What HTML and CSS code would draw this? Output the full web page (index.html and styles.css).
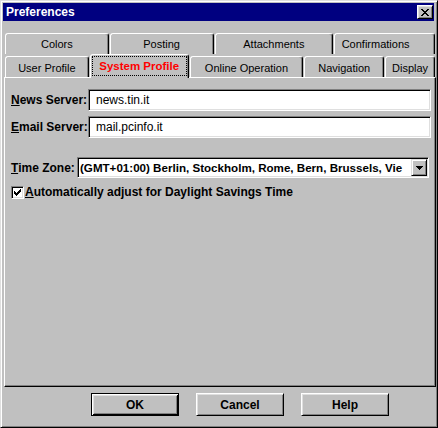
FILE: index.html
```html
<!DOCTYPE html>
<html lang="en">
<head>
  <meta charset="UTF-8" />
  <title>Preferences</title>
  <link rel="stylesheet" href="styles.css">
</head>
<body>

  <div class="window">
    <div class="titlebar">
      <span class="title">Preferences</span>
      <button class="close" type="button">
        <svg width="8" height="7" viewBox="0 0 8 7" shape-rendering="crispEdges">
          <rect x="0" y="0" width="2" height="1" />
          <rect x="6" y="0" width="2" height="1" />
          <rect x="1" y="1" width="2" height="1" />
          <rect x="5" y="1" width="2" height="1" />
          <rect x="2" y="2" width="4" height="1" />
          <rect x="3" y="3" width="2" height="1" />
          <rect x="2" y="4" width="4" height="1" />
          <rect x="1" y="5" width="2" height="1" />
          <rect x="5" y="5" width="2" height="1" />
          <rect x="0" y="6" width="2" height="1" />
          <rect x="6" y="6" width="2" height="1" />
        </svg>
      </button>
    </div>

    <!-- two rows of tabs, the front row touches the page -->
    <div class="tabs">
      <div class="tab-row back">
        <div class="tab tab-colors">Colors</div>
        <div class="tab tab-posting">Posting</div>
        <div class="tab tab-attach">Attachments</div>
        <div class="tab tab-confirm">Confirmations</div>
      </div>
      <div class="tab-row front">
        <div class="tab tab-user">User Profile</div>
        <div class="tab tab-system selected"><span class="focus">System Profile</span></div>
        <div class="tab tab-online">Online Operation</div>
        <div class="tab tab-nav">Navigation</div>
        <div class="tab tab-display">Display</div>
      </div>
    </div>

    <div class="panel">
      <div class="field">
        <label class="label" for="news"><u>N</u>ews Server:</label>
        <input class="textbox" type="text" id="news" value="news.tin.it" />
      </div>
      <div class="field field-email">
        <label class="label" for="email"><u>E</u>mail Server:</label>
        <input class="textbox" type="text" id="email" value="mail.pcinfo.it" />
      </div>
      <div class="field field-zone">
        <span class="label label-zone"><u>T</u>ime Zone:</span>
        <div class="combo">
          <span class="combo-text">(GMT+01:00) Berlin, Stockholm, Rome, Bern, Brussels, Vie</span>
          <span class="combo-btn">
            <svg width="7" height="4" viewBox="0 0 7 4" shape-rendering="crispEdges">
              <rect x="0" y="0" width="7" height="1" />
              <rect x="1" y="1" width="5" height="1" />
              <rect x="2" y="2" width="3" height="1" />
              <rect x="3" y="3" width="1" height="1" />
            </svg>
          </span>
        </div>
      </div>
      <div class="check-row">
        <span class="checkbox">
          <svg width="7" height="7" viewBox="0 0 7 7" shape-rendering="crispEdges">
            <rect x="6" y="0" width="1" height="1" />
            <rect x="5" y="1" width="2" height="1" />
            <rect x="0" y="2" width="1" height="1" />
            <rect x="4" y="2" width="3" height="1" />
            <rect x="0" y="3" width="2" height="1" />
            <rect x="3" y="3" width="3" height="1" />
            <rect x="0" y="4" width="5" height="1" />
            <rect x="1" y="5" width="3" height="1" />
            <rect x="2" y="6" width="1" height="1" />
          </svg>
        </span>
        <span class="check-label"><u>A</u>utomatically adjust for Daylight Savings Time</span>
      </div>
    </div>

    <div class="buttons">
      <button class="btn default" type="button">OK</button>
      <button class="btn" type="button">Cancel</button>
      <button class="btn" type="button">Help</button>
    </div>
  </div>

</body>
</html>
```

FILE: styles.css
```css
body {
  margin: 0;
  font-family: "Liberation Sans", Arial, sans-serif;
  font-size: 12px;
  background-color: #c0c0c0;
}

/* Janela */
.window {
  box-sizing: border-box;
  width: 438px;
  height: 428px;
  display: flex;
  flex-direction: column;
  padding: 2px 1px 1px 2px;
  background-color: #c0c0c0;
  border: 1px solid;
  border-color: #dfdfdf #000 #000 #dfdfdf;
  box-shadow: inset 1px 1px #fff, inset -1px -1px #808080;
}

.titlebar {
  height: 18px;
  margin-right: 2px;
  padding-left: 3px;
  display: flex;
  align-items: center;
  justify-content: space-between;
  background-color: #000080;
  color: white;
}

.title {
  font-weight: bold;
  font-size: 12px;
}

.close {
  box-sizing: border-box;
  width: 16px;
  height: 14px;
  margin-right: 1px;
  padding: 0;
  display: flex;
  align-items: center;
  justify-content: center;
  background-color: #c0c0c0;
  border: 1px solid;
  border-color: #fff #000 #000 #fff;
  box-shadow: inset 1px 1px #dfdfdf, inset -1px -1px #808080;
}

/* Abas */
.tabs {
  margin-top: 12px;
  padding-left: 2px;
}

.tab-row {
  display: flex;
  align-items: flex-end;
}

.tab {
  box-sizing: border-box;
  height: 21px;
  margin-right: 1px;
  border: 1px solid;
  border-bottom: 0;
  border-color: #fff #000 transparent #fff;
  border-radius: 3px 3px 0 0;
  box-shadow: inset -1px 0 #808080;
  background-color: #c0c0c0;
  text-align: center;
  font-size: 11px;
  line-height: 20px;
  white-space: nowrap;
}

.front .tab {
  padding-top: 2px;
  line-height: 18px;
}

.tab-colors { width: 104px; }
.tab-posting { width: 104px; }
.tab-attach { width: 119px; }
.tab-confirm { width: 101px; padding-right: 18px; }

.tab-user { width: 84px; }
.tab-system { width: 99px; }
.tab-online { width: 114px; }
.tab-nav { width: 80px; }
.tab-display { width: 50px; }

.front .tab.selected {
  position: relative;
  z-index: 1;
  height: 24px;
  margin-bottom: -1px;
  padding: 1px 1px 0;
  color: red;
  font-weight: bold;
  font-size: 11.5px;
}

.focus {
  display: block;
  border: 1px dotted #000;
  line-height: 18px;
}

/* Página */
.panel {
  flex: 1;
  box-sizing: border-box;
  margin-left: 1px;
  padding: 11px 4px 0 6px;
  border: 1px solid;
  border-color: #fff #000 #000 #fff;
  box-shadow: inset -1px -1px #808080;
}

.field {
  display: flex;
  align-items: center;
}

.field-email {
  margin-top: 5px;
}

.field-zone {
  margin-top: 19px;
}

.label {
  width: 77px;
  flex-shrink: 0;
  font-weight: bold;
  font-size: 12px;
}

.label-zone {
  width: 66px;
}

.textbox {
  flex: 1;
  min-width: 0;
  box-sizing: border-box;
  height: 22px;
  margin: 0;
  padding: 0 0 0 7px;
  font-family: inherit;
  font-size: 12px;
  color: #000;
  background-color: #fff;
  border: 1px solid;
  border-color: #808080 #fff #fff #808080;
  box-shadow: inset 1px 1px #000, inset -1px -1px #dfdfdf;
  outline: none;
}

.combo {
  flex: 1;
  min-width: 0;
  box-sizing: border-box;
  height: 21px;
  margin-right: 2px;
  padding: 1px;
  display: flex;
  background-color: #fff;
  border: 1px solid;
  border-color: #808080 #fff #fff #808080;
  box-shadow: inset 1px 1px #000, inset -1px -1px #dfdfdf;
}

.combo-text {
  flex: 1;
  overflow: hidden;
  white-space: nowrap;
  padding-left: 1px;
  line-height: 17px;
  font-size: 11.6px;
  font-weight: bold;
}

.combo-btn {
  box-sizing: border-box;
  width: 16px;
  height: 17px;
  display: flex;
  align-items: center;
  justify-content: center;
  background-color: #c0c0c0;
  border: 1px solid;
  border-color: #dfdfdf #000 #000 #dfdfdf;
  box-shadow: inset 1px 1px #fff, inset -1px -1px #808080;
}

.check-row {
  margin-top: 7px;
  display: flex;
  align-items: center;
}

.checkbox {
  box-sizing: border-box;
  width: 13px;
  height: 13px;
  display: flex;
  align-items: center;
  justify-content: center;
  background-color: #fff;
  border: 1px solid;
  border-color: #808080 #fff #fff #808080;
  box-shadow: inset 1px 1px #000, inset -1px -1px #dfdfdf;
}

.check-label {
  margin-left: 1px;
  font-weight: bold;
}

/* Botões */
.buttons {
  height: 23px;
  margin: 6px 0 10px;
  padding-left: 88px;
  display: flex;
  gap: 17px;
}

.btn {
  box-sizing: border-box;
  width: 88px;
  height: 23px;
  padding: 0;
  font-family: inherit;
  font-size: 12px;
  font-weight: bold;
  color: #000;
  background-color: #c0c0c0;
  border: 1px solid;
  border-color: #fff #000 #000 #fff;
  box-shadow: inset 1px 1px #dfdfdf, inset -1px -1px #808080;
}

.btn.default {
  border-color: #000;
  box-shadow: inset 1px 1px #fff, inset -1px -1px #000, inset 2px 2px #dfdfdf, inset -2px -2px #808080;
}
```
